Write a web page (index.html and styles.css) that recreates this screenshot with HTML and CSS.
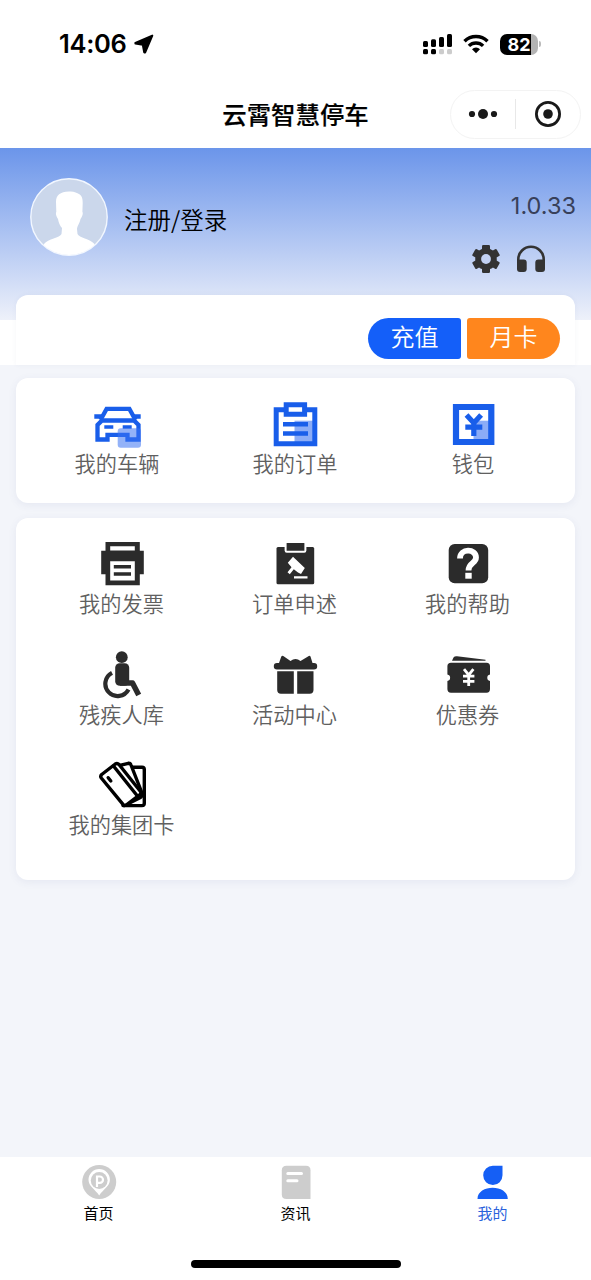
FILE: index.html
```html
<!DOCTYPE html>
<html lang="zh-CN">
<head>
<meta charset="utf-8">
<meta name="viewport" content="width=device-width, initial-scale=1">
<title>云霄智慧停车</title>
<link rel="stylesheet" href="styles.css">
</head>
<body>
<div class="app">
  <div class="status">
    <div class="status-left">
      <span class="time">14:06</span>
      <svg width="20" height="20" viewBox="0 0 20 20"><path d="M18.300 1.600 1.400 8.800 1.400 9.600 8.800 10.800 10.200 18.400 11.200 18.400Z" fill="#000" stroke="#000" stroke-width="2" stroke-linejoin="round"/></svg>
    </div>
    <div class="status-right">
      <svg width="30" height="21" viewBox="0 0 30 21">
        <rect x="0" y="7" width="5" height="6" rx="1.5"/><rect x="8" y="5.3" width="5" height="7.7" rx="1.5"/><rect x="16" y="3" width="5" height="10" rx="1.5"/><rect x="24" y="0" width="5" height="13" rx="1.5"/>
        <rect x="0" y="15" width="5" height="5.3" rx="1.5"/><rect x="8" y="15" width="5" height="5.3" rx="1.5"/><rect x="16" y="15" width="5" height="5.3" rx="1.5" fill="#ccc"/><rect x="24" y="15" width="5" height="5.3" rx="1.5" fill="#ccc"/>
      </svg>
      <svg class="wifi" width="26" height="20" viewBox="0 0 26 20"><g fill="none" stroke="#000" stroke-width="3.4"><path d="M1.5 7.2a16.4 16.4 0 0 1 23 0"/><path d="M5.9 11.9a10.2 10.2 0 0 1 14.2 0"/></g><path d="M13 19.2 9 15.2a5.8 5.8 0 0 1 8 0Z"/></svg>
      <div class="battery"><span>82</span></div>
      <i class="battery-tip"></i>
    </div>
  </div>
  <header class="nav">
    <h1 class="title">云霄智慧停车</h1>
    <div class="capsule">
      <div class="capsule-part"><svg width="30" height="12" viewBox="0 0 30 12" fill="#191919"><circle cx="4" cy="6" r="3.1"/><circle cx="15" cy="6" r="5"/><circle cx="26" cy="6" r="3.1"/></svg></div>
      <div class="capsule-part capsule-close"><svg width="28" height="28" viewBox="0 0 28 28"><circle cx="14" cy="14" r="11.6" fill="none" stroke="#191919" stroke-width="2.8"/><circle cx="14" cy="14" r="4.8" fill="#191919"/></svg></div>
    </div>
  </header>

  <section class="hero">
    <div class="profile">
      <svg class="avatar" width="78" height="78" viewBox="0 0 78 78"><defs><clipPath id="face"><circle cx="39" cy="39" r="38"/></clipPath></defs><circle cx="39" cy="39" r="38.2" fill="#cbd7eb" stroke="#f2f7ff" stroke-width="1.4"/><path clip-path="url(#face)" fill="#fff" d="M39 13.500C44 13 47 15 49 16C52 17.500 52.700 21 52.700 25L52.400 34C53.500 35 52 39 50.500 41C49.500 46 47 48 47 51L47.500 56C49 60 60 60.500 64.500 66L64 78H14L14 66C18 60.500 30 60 31.500 56L32 50C30 48 28.500 44 28 41C26 38 25.500 35 26.300 34L26 24C26 17 30 14 39 13.500Z"/></svg>
      <span class="login">注册/登录</span>
      <div class="tools">
        <span class="version">1.0.33</span>
        <div class="tool-icons">
          <svg width="30" height="30" viewBox="-15 -15 30 30"><g fill="#333"><circle r="10.800"/><rect x="-4" y="-14" width="8" height="28" rx="1.200"/><rect x="-4" y="-14" width="8" height="28" rx="1.200" transform="rotate(60)"/><rect x="-4" y="-14" width="8" height="28" rx="1.200" transform="rotate(120)"/></g><circle r="4.900" fill="#c2d1f3"/></svg>
          <svg width="30" height="30" viewBox="0 0 30 30"><path d="M2.300 20V15.500a12.700 12.700 0 0 1 25.400 0V20" fill="none" stroke="#333" stroke-width="2.600"/><rect x="1" y="15.500" width="9.700" height="12.500" rx="3" fill="#333"/><rect x="19.300" y="15.500" width="9.700" height="12.500" rx="3" fill="#333"/></svg>
        </div>
      </div>
    </div>
    <div class="balance">
      <a class="btn recharge">充值</a>
      <a class="btn monthly">月卡</a>
    </div>
  </section>

  <main class="content">
    <section class="card primary">
      <a class="item"><svg class="icon" viewBox="0 0 48 48"><g fill="none" stroke="#195eea" stroke-width="4.300"><path d="M7.500 20 13.600 8.900H36.400L42.500 20"/><path d="M1.300 16.500H9M40 16.500H47.700"/><path d="M4.500 39.500V25L9 20.500H41L45.500 25V39.500H34.500V34.800H14.500V39.500Z"/><path stroke-width="3.500" d="M11.300 27H20.300M29.700 27H38.700"/></g><rect x="24.700" y="28.300" width="23.300" height="19.400" rx="3" fill="#3a72f2" opacity=".55"/></svg><span>我的车辆</span></a>
      <a class="item"><svg class="icon" viewBox="0 0 48 48"><path d="M23.500 20.700H42V42H23.500Z" fill="#8bacf7"/><g fill="none" stroke="#195eea" stroke-width="5"><path d="M13 9.800H5.200V43.800H43.800V9.800H36"/><path d="M15.200 4.800H33.600V14.200H15.200Z"/><path stroke-width="4.500" d="M12 24.300H37M12 33.600H37"/></g></svg><span>我的订单</span></a>
      <a class="item"><svg class="icon" viewBox="0 0 48 48"><path d="M24.500 20.700H40V40H24.500Z" fill="#8bacf7"/><g fill="none" stroke="#195eea"><path stroke-width="6.200" d="M7 7H42.300V42H7Z"/><path stroke-width="5.200" d="M17.500 15 24.800 23 32.100 15M24.800 22V36M16.300 27.200H33.300"/></g></svg><span>钱包</span></a>
    </section>

    <section class="card services">
      <a class="item"><svg class="icon" viewBox="0 0 48 48"><path fill="#2b2b2b" fill-rule="evenodd" d="M7.500 2H41.800V10.700H45.800V34.300H41.800V45.300H7.500V34.300H3.200V10.700H7.500ZM12.200 6.300V10.500H36.800V6.300ZM12.200 21.300V40.500H36.800V21.300ZM15.800 25H33V28.500H15.800ZM15.800 32.300H33V35.700H15.800Z"/></svg><span>我的发票</span></a>
      <a class="item"><svg class="icon" viewBox="0 0 48 48" fill="#2b2b2b"><rect x="5.500" y="7" width="37.700" height="37.300" rx="1.500"/><rect x="14.600" y="2" width="19.800" height="9.700" rx="1.200" stroke="#fff" stroke-width="2"/><path fill="#fff" d="M22 16.700 33.800 28 30 34 27 32.500 22.800 29.300 18.800 34.300 16.500 32.300 20.500 27.300 16.800 22.700ZM23 36.200H36.500V38.400H23Z"/></svg><span>订单申述</span></a>
      <a class="item"><svg class="icon" viewBox="0 0 48 48"><rect x="4.700" y="4" width="39.500" height="39.300" rx="6" fill="#2b2b2b"/><path d="M16 18.500C16 8.300 32 8.300 32 17.500C32 23.500 24.500 22.500 24.500 30.500" fill="none" stroke="#fff" stroke-width="5.800"/><path fill="#fff" d="M21.300 32.800H27.700V38.700H21.300Z"/></svg><span>我的帮助</span></a>
      <a class="item"><svg class="icon" viewBox="0 0 48 48"><circle cx="23.800" cy="6.200" r="5.900" fill="#2b2b2b"/><rect x="17.200" y="12.200" width="14" height="22.600" rx="4.500" fill="#2b2b2b"/><g fill="none" stroke="#2b2b2b"><path stroke-width="5.500" stroke-linejoin="round" d="M22 32.100H34.500L40.700 44"/><path stroke-width="4.200" d="M14 21.800A12.300 12.300 0 1 0 30.500 38.500"/></g></svg><span>残疾人库</span></a>
      <a class="item"><svg class="icon" viewBox="0 0 48 48" fill="#2b2b2b"><path d="M6 12H8L10.300 5.500Q11.500 4 13 5.500L19.500 10Q24.500 6 29.500 10L37 5.500Q38.500 4 39.500 5.500L41.500 12H43A3.200 3.200 0 0 1 43 18.400H6A3.200 3.200 0 0 1 6 12Z"/><path d="M6.200 20.200H22.800V42.700H10Q6.200 42.700 6.200 39ZM26.200 20.200H42.500V39Q42.500 42.700 38.700 42.700H26.200Z"/></svg><span>活动中心</span></a>
      <a class="item"><svg class="icon" viewBox="0 0 48 48"><path fill="#2b2b2b" d="M8 9.800 9.500 6.500Q10.500 5 13 5.200L41.500 8.800V9.800ZM7 11.800H42.500Q46 11.800 46 15.300V23.500A3.300 3.300 0 0 0 46 30V38Q46 41.700 42.500 41.700H7Q3.400 41.700 3.400 38V30A3.300 3.300 0 0 0 3.400 23.500V15.300Q3.400 11.800 7 11.800Z"/><path fill="none" stroke="#fff" stroke-width="2.800" d="M20 18.200 24.700 24 29.400 18.200M24.700 23V35M19 25.200H30.400M19 30.400H30.400"/></svg><span>优惠券</span></a>
      <a class="item"><svg class="icon" viewBox="0 0 48 48"><g fill="#fff" stroke="#000" stroke-width="3.400" stroke-linejoin="round" stroke-linecap="round"><path d="M33 6.300H44Q46.300 6.300 46.300 8.600V42.300Q46.300 44.600 44 44.600H25Z"/><path d="M20 4.800 30.300 2.300Q32.300 2 33 4L44 32Q45 34.500 42.500 36.500L26 44.600Z"/><path d="M17.300 3Q19.300 1.600 21 3.500L42.500 30.500Q43.500 32 42 33.500L28.500 43.800Q26.500 45 25 43.300L3.300 17Q2 15.300 3.700 13.500Z"/><path d="M15.500 5 39 34.500M10.200 16.700 12.800 20"/></g></svg><span>我的集团卡</span></a>
    </section>
  </main>

  <nav class="tabbar">
    <a class="tab"><svg class="tab-icon" viewBox="0 0 36 36"><circle cx="18.200" cy="18" r="17" fill="#cdcdcd"/><path fill="#fff" d="M18.200 5A10.700 10.700 0 0 1 28.900 15.800C28.900 22.500 22 25.500 18.200 31.500C14.400 25.500 7.500 22.500 7.500 15.800A10.700 10.700 0 0 1 18.200 5Z"/><circle cx="18.200" cy="16.500" r="8.400" fill="#cdcdcd"/><path d="M16 23V12.500H18.800A3.200 3.200 0 0 1 18.800 18.900H16" fill="none" stroke="#fff" stroke-width="2.200"/></svg><span>首页</span></a>
    <a class="tab"><svg class="tab-icon" viewBox="0 0 36 36"><path fill="#cdcdcd" d="M8.500 1.700H28Q32.500 1.700 32.500 6.200V35H8.500Q3.800 35 3.800 30.500V6.200Q3.800 1.700 8.500 1.700Z"/><path d="M9.800 9.500H23.500M9.800 16.800H19" stroke="#fff" stroke-width="3" stroke-linecap="round"/></svg><span>资讯</span></a>
    <a class="tab active"><svg class="tab-icon" viewBox="0 0 36 36" fill="#155ff5"><path d="M17.900 1.700H27.500V11.300A9.650 9.650 0 1 1 17.900 1.700ZM2.500 35C2.500 20 32.800 20 32.800 35Z"/></svg><span>我的</span></a>
    <div class="home-indicator"></div>
  </nav>
</div>
</body>
</html>
```

FILE: styles.css
```css
* { box-sizing: border-box; }

body {
  margin: 0;
  background: #f3f5fa;
  font-family: "Liberation Sans", "Noto Sans CJK SC", sans-serif;
  color: #000;
}

svg { display: block; flex: none; }

.app {
  width: 591px;
  height: 1280px;
  display: flex;
  flex-direction: column;
  overflow: hidden;
}

.status {
  height: 88px;
  flex: none;
  display: flex;
  justify-content: space-between;
  padding: 0 50px 0 59px;
  background: #fff;
  align-items: center;
}

.status-left { display: flex; align-items: center; gap: 7px; }

.time {
  font: 600 25.5px/30px Inter, sans-serif;
  letter-spacing: -.3px;
}

.status-right { display: flex; align-items: center; }

.wifi { margin: 0 11px 0 10px; }

.battery {
  width: 38px;
  height: 21px;
  border-radius: 7px;
  background: linear-gradient(90deg, #000 31px, #b3b3b3 31px);
  color: #fff;
  font: 700 18px/21px Inter, sans-serif;
  text-align: center;
}

.battery-tip {
  width: 2px;
  height: 6px;
  margin-left: 1px;
  border-radius: 0 3px 3px 0;
  background: #bbb;
}

.nav {
  height: 59.5px;
  flex: none;
  display: grid;
  grid-template-columns: 141.500px 1fr 141.500px;
  padding-top: 1.500px;
  background: #fff;
}

.title {
  grid-column: 2;
  margin: 0;
  font: 500 24.4px/47px "Noto Sans CJK SC", sans-serif;
  text-align: center;
  -webkit-text-stroke: .2px #000;
}

.capsule {
  display: flex;
  width: 131px;
  height: 49px;
  border: 1px solid #f3f3f3;
  border-radius: 25px;
  align-items: center;
}

.capsule-part {
  flex: 1;
  height: 30px;
  display: flex;
  align-items: center;
  justify-content: center;
}

.capsule-close { border-left: 1px solid #e8e8e8; }

.hero {
  height: 217.5px;
  flex: none;
  display: flex;
  flex-direction: column;
  background: linear-gradient(180deg, #6b95ea 0, #eef1fa 172px, #fff 172.500px);
}

.profile {
  height: 147px;
  flex: none;
  display: flex;
  padding: 30px 15px 0 30px;
}

.login {
  margin-left: 16px;
  padding-top: 23.500px;
  font: 350 23.500px/36px "Noto Sans CJK SC", sans-serif;
}

.tools {
  margin-left: auto;
  padding-top: 12px;
  display: flex;
  flex-direction: column;
  align-items: flex-end;
}

.version {
  font: 400 23.5px/32px Inter, sans-serif;
  color: #38405a;
}

.tool-icons { display: flex; gap: 15px; margin: 22px 30.500px 0 0; }

.balance {
  flex: 1;
  margin: 0 16px;
  padding: 23.500px 15px 0;
  display: flex;
  justify-content: flex-end;
  gap: 6px;
  background: #fff;
  border-radius: 12px 12px 0 0;
  box-shadow: 0 0 5px rgba(60, 80, 140, .05);
}

.btn {
  width: 93px;
  height: 40.500px;
  color: #fff;
  font: 350 24px/36px "Noto Sans CJK SC", sans-serif;
  text-align: center;
}

.recharge { background: #145ff9; border-radius: 21px 3px 3px 21px; }
.monthly { background: #ff861d; border-radius: 3px 21px 21px 3px; }

.content {
  flex: 1;
  display: flex;
  flex-direction: column;
  gap: 14.500px;
  padding: 13px 16px 0;
}

.card {
  display: grid;
  grid-template-columns: repeat(3, 1fr);
  align-content: start;
  background: #fff;
  border-radius: 12px;
  box-shadow: 0 2px 8px rgba(60, 80, 140, .08);
}

.primary { height: 125px; padding: 22px 13px 0 12px; }

.services {
  height: 362.500px;
  padding: 22.500px 21px 0 19px;
  grid-template-rows: 111px 110px 111px;
}

.item {
  display: flex;
  flex-direction: column;
  align-items: center;
  color: #606060;
  font: 350 21.200px/30px "Noto Sans CJK SC", sans-serif;
}

.icon { width: 48px; height: 48px; }

.tabbar {
  height: 123px;
  flex: none;
  display: grid;
  grid-template-columns: repeat(3, 1fr);
  grid-template-rows: 96px 8px;
  padding-top: 7px;
  background: #fff;
}

.tab {
  display: flex;
  flex-direction: column;
  align-items: center;
  font: 400 15px/26px "Noto Sans CJK SC", sans-serif;
}

.tab-icon { width: 36px; height: 36px; }

.active { color: #2a62dc; }

.home-indicator {
  grid-column: 1 / -1;
  justify-self: center;
  width: 210px;
  height: 8px;
  border-radius: 4px;
  background: #000;
}
```
